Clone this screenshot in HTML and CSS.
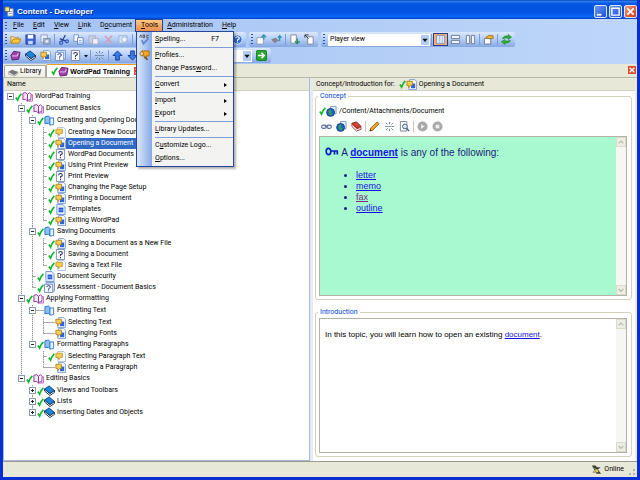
FILE: index.html
```
<!DOCTYPE html>
<html lang="en">

<head>
    <meta charset="UTF-8">
    <meta name="viewport" content="width=device-width, initial-scale=1.0">
    <title>Content - Developer</title>
    <link rel="stylesheet" href="styles.css">
</head>

<body>

    <!-- icon sprite -->
    <svg class="sprite" aria-hidden="true">
        <symbol id="check" viewBox="0 0 8 10"><path d="M1 5.500L3 8.500Q4.500 4 7.300 1.500" fill="none" stroke="#0cb82c" stroke-width="1.900"/></symbol>
        <symbol id="app" viewBox="0 0 12 12"><path d="M4 3h6v8H4z" fill="#fff" stroke="#8a8a80"/><path d="M5 6h4M5 8h4" stroke="#999"/><path d="M1 1h5v5H1z" fill="#f5e27a" stroke="#666"/></symbol>
        <symbol id="book-open" viewBox="0 0 12 12"><path d="M1 2.500Q4 .5 6 3.500v7.500Q4 8 1 9.500z" fill="#f4e2f6" stroke="#8c2d96"/><path d="M6 3.500Q8 .5 10 3.500L9.500 10Q7.500 8.500 6 11z" fill="#fff" stroke="#8c2d96"/><path d="M10 4h1.500v7H6" fill="none" stroke="#b565bd"/></symbol>
        <symbol id="chapter" viewBox="0 0 12 12"><path d="M1 2l4-1 1.500 2v8L5 9 1 9.500z" fill="#8cc0f6" stroke="#2a72cc"/><path d="M6.500 3.500L10.500 3v7.500l-4 .5z" fill="#eaf4ff" stroke="#2e7bd2"/></symbol>
        <symbol id="book-closed" viewBox="0 0 12 12"><path d="M.5 4.500L5.500 1l6 5-5 3.500z" fill="#1b86dc" stroke="#0a3d7c"/><path d="M.5 4.500v2L6.500 11.500l5-3.500V6l-5 3.500z" fill="#fff" stroke="#12294a"/></symbol>
        <symbol id="topic" viewBox="0 0 12 12"><path d="M4 .5h5.500l2 2v9H3z" fill="#eef5ff" stroke="#7d9fcd"/><path d="M5.500 5h4.500v5H5.500z" fill="#2c62da"/><path d="M1 2.500h6v4.500H5L3 9.500V7H1z" fill="#fbd052" stroke="#b5861a"/></symbol>
        <symbol id="note" viewBox="0 0 12 12"><path d="M3 .5h6.500l2 2v9H3z" fill="#f7faff" stroke="#a9bedb"/><path d="M1 2.500h7v4.500H6L4 9.500V7H1z" fill="#fbd052" stroke="#c49a2c"/></symbol>
        <symbol id="question" viewBox="0 0 12 12"><path d="M1.500.5h9v11h-9z" fill="#fff" stroke="#7a84a8"/><path d="M4 4.500Q4 2.700 6 2.700T8 4.500Q8 5.500 6 6.300V7.500M6 8.500V10" fill="none" stroke="#27337c" stroke-width="1.200"/></symbol>
        <symbol id="page" viewBox="0 0 12 12"><path d="M2 .5h6.500l2.500 2.500v8.500H2z" fill="#e3eeff" stroke="#6e93cf"/><path d="M4 4h5v5H4z" fill="#2458d8"/><path d="M4 6.500h5" stroke="#86a8f0"/></symbol>
        <symbol id="assess" viewBox="0 0 12 12"><path d="M2.500.5h9v9.500h-9z" fill="#dce8fa" stroke="#6e93cf"/><path d="M.5 2.500h9v9h-9z" fill="#f3f8ff" stroke="#6e8dbd"/><path d="M3 5.500Q3 4 5 4t2 1.500Q7 6.500 5 7.300V8.500M5 9.300v1" fill="none" stroke="#27337c"/></symbol>
        <symbol id="library" viewBox="0 0 12 12"><path d="M0 6.500L4.500 4l7 2.500L7 10z" fill="#777"/><path d="M0 6.500v2L7 11l4.500-3" fill="none" stroke="#aaa"/></symbol>
        <symbol id="title" viewBox="0 0 12 12"><path d="M1 6L4 1.500l7 1L9.500 10l-7 1z" fill="#a43fb0" stroke="#55205e"/><path d="M2 6.500h6L9 3" fill="none" stroke="#f0d0f4"/></symbol>
        <symbol id="folder" viewBox="0 0 12 12"><path d="M1 10V3h3l1 1h4v2" fill="#ffe9a0" stroke="#c08a1c"/><path d="M1 10l2.500-4.500H12L9.500 10z" fill="#ffc640" stroke="#b67f14"/></symbol>
        <symbol id="save" viewBox="0 0 12 12"><path d="M1 1h10v10H1z" fill="#3a62d8" stroke="#2440a0"/><path d="M3 1h6v4H3z" fill="#fff"/><path d="M3.500 7.500h5V11h-5z" fill="#c7d7f5"/></symbol>
        <symbol id="save-all" viewBox="0 0 12 12"><path d="M1 1h7v8H1z" fill="#eaf0fb" stroke="#8d9dbd"/><path d="M4 5h7v6H4z" fill="#a5b5d3" stroke="#7384a8"/><circle cx="7.500" cy="8" r="1.500" fill="#e8eef9"/></symbol>
        <symbol id="cut" viewBox="0 0 12 12"><path d="M8 1L4.500 8M2 5l7 3" stroke="#2a3b86" stroke-width="1.300"/><circle cx="3.500" cy="9.500" r="1.700" fill="none" stroke="#2b50c0" stroke-width="1.200"/><circle cx="9.800" cy="8" r="1.600" fill="none" stroke="#2b50c0" stroke-width="1.200"/></symbol>
        <symbol id="copy" viewBox="0 0 12 12"><path d="M1 1h5v7H1z" fill="#fff" stroke="#6f8fcf"/><path d="M5 4h6v7H5z" fill="#fff" stroke="#5b80c8"/><path d="M6.500 7h3M6.500 9h3" stroke="#7fa0e0"/></symbol>
        <symbol id="paste" viewBox="0 0 12 12"><path d="M1 2h7v8H1z" fill="#c9d2e2" stroke="#a2aec6"/><path d="M5 5h6v6H5z" fill="#eef2f9" stroke="#a2aec6"/></symbol>
        <symbol id="delete" viewBox="0 0 12 12"><path d="M2 2l8 8M10 2l-8 8" stroke="#d99bb4" stroke-width="1.500"/></symbol>
        <symbol id="props" viewBox="0 0 12 12"><path d="M1 2h9v8H1z" fill="#d9e5f8" stroke="#98afd6"/><circle cx="7" cy="6" r="3" fill="#eef4ff" stroke="#98afd6"/></symbol>
        <symbol id="help" viewBox="0 0 12 12"><circle cx="6" cy="6" r="5" fill="#2f6cd4" stroke="#e8f0ff"/><path d="M4 4.700Q4 3 6 3t2 1.500Q8 5.500 6 6.500v1M6 8.300v1" fill="none" stroke="#fff" stroke-width="1.200"/></symbol>
        <symbol id="export" viewBox="0 0 12 12"><path d="M1 4h7v7H1z" fill="#fff" stroke="#8e9cb4"/><path d="M8.500 6V1M6 3.500L8.500 1 11 3.500" fill="none" stroke="#2d98a8" stroke-width="1.500"/></symbol>
        <symbol id="export2" viewBox="0 0 12 12"><path d="M0 6l5-2 4 3-5 3z" fill="#7f8794"/><path d="M9.500 8V2M7.500 4L9.500 2l2 2" fill="none" stroke="#2d98a8" stroke-width="1.500"/></symbol>
        <symbol id="import" viewBox="0 0 12 12"><path d="M2 1h6v9H2z" fill="#fff" stroke="#7d8aa0"/><path d="M9 5v5M6.500 8L9 10.500 11.500 8" fill="none" stroke="#259058" stroke-width="1.500"/></symbol>
        <symbol id="history" viewBox="0 0 12 12"><path d="M4 3h6v8H4z" fill="#fff" stroke="#85858c"/><path d="M1 4V1h4M1 1l4 4" fill="none" stroke="#333"/></symbol>
        <symbol id="view-full" viewBox="0 0 12 12"><path d="M1.500 1.500h9v9h-9z" fill="#dbe8fb" stroke="#8093b8"/><path d="M5 2v8M8 2v8" stroke="#a9bfe4"/></symbol>
        <symbol id="view-rows" viewBox="0 0 12 12"><path d="M1.500 1.500h9v3.500h-9zM1.500 7h9v3.500h-9z" fill="#eef4fd" stroke="#6c7a92"/></symbol>
        <symbol id="view-cols" viewBox="0 0 12 12"><path d="M1.500 1.500h3.500v9H1.500zM7 1.500h3.500v9H7z" fill="#eef4fd" stroke="#6c7a92"/></symbol>
        <symbol id="hand" viewBox="0 0 12 12"><path d="M1.500 5h7v6h-7z" fill="#fff" stroke="#68779a"/><path d="M3 4Q6 0 11 2v3H6z" fill="#efb63c" stroke="#a8731a"/></symbol>
        <symbol id="refresh" viewBox="0 0 12 12"><path d="M1.500 5Q3 1.500 8 2V.5l3.500 3L8 6V4.500Q4 4 1.500 5z" fill="#2eb336" stroke="#0f7a1a" stroke-width=".6"/><path d="M10.500 7Q9 10.500 4 10v1.500L.5 8.500 4 6v1.500Q8 8 10.500 7z" fill="#2eb336" stroke="#0f7a1a" stroke-width=".6"/></symbol>
        <symbol id="unlink" viewBox="0 0 12 12"><path d="M1 6h3M8 6h3M6 1v2.500M6 8.500V11M2 2l2 2M10 2L8 4M2 10l2-2M10 10L8 8M4.500 6h3" stroke="#6b7b99"/></symbol>
        <symbol id="up" viewBox="0 0 12 12"><path d="M6 1l5 5H8v5H4V6H1z" fill="#3b7ce6" stroke="#163c96"/></symbol>
        <symbol id="down" viewBox="0 0 12 12"><path d="M6 11L1 6h3V1h4v5h3z" fill="#3b7ce6" stroke="#163c96"/></symbol>
        <symbol id="go" viewBox="0 0 12 12"><rect x=".5" y=".5" width="11" height="11" rx="1.500" fill="#2ba634" stroke="#14791c"/><path d="M2 6h7M6 3l3 3-3 3" fill="none" stroke="#fff" stroke-width="1.600"/></symbol>
        <symbol id="abc" viewBox="0 0 12 12"><path d="M1 4V2.500L2 1l1 1.500V4M4.500 1v3h1.500V1zM10.500 1.500H8.500v2.500h2" fill="none" stroke="#555"/><path d="M3 7l2 3.500L10 5" fill="none" stroke="#5d86cf" stroke-width="2"/></symbol>
        <symbol id="profile" viewBox="0 0 12 12"><path d="M3 1h8v5.500H8L6 9V6.500H3z" fill="#f5a623" stroke="#a86a10"/><circle cx="3" cy="4" r="2" fill="#f8d9a0" stroke="#9a6a20"/><path d="M6 8l2 3h2L8 7z" fill="#7a4a14"/></symbol>
        <symbol id="globe" viewBox="0 0 12 12"><path d="M5 .5h6v8H5z" fill="#e4edfb" stroke="#7c99c8"/><circle cx="5" cy="7" r="4.300" fill="#1f66c8" stroke="#123a7a"/><path d="M2.500 5.500Q4 3.500 6 4.500L5 7l2 1-1.500 2.500Q3 9 3.500 7.500z" fill="#35a552"/></symbol>
        <symbol id="link" viewBox="0 0 12 12"><rect x=".7" y="4.500" width="5" height="3.500" rx="1.700" fill="none" stroke="#5c6c9c" stroke-width="1.200"/><rect x="6.300" y="4.500" width="5" height="3.500" rx="1.700" fill="none" stroke="#5c6c9c" stroke-width="1.200"/><path d="M4 6.200h4" stroke="#5c6c9c"/></symbol>
        <symbol id="books" viewBox="0 0 12 12"><path d="M1 2.500L6 1l5 5-5 1.500z" fill="#d8422e" stroke="#8a1c12"/><path d="M1 3l5 5.500L11 7v2l-5 2L1 6z" fill="#fff" stroke="#a33"/></symbol>
        <symbol id="pencil" viewBox="0 0 12 12"><path d="M1 11l1-3.500L9 1l2 2-7 7z" fill="#f2a828" stroke="#8a5a12"/><path d="M1 11l.5-2L3 10.500z" fill="#222"/></symbol>
        <symbol id="preview" viewBox="0 0 12 12"><path d="M1.500.5h7v10.500h-7z" fill="#fff" stroke="#777f92"/><circle cx="6.500" cy="6" r="2.600" fill="#d9eafc" stroke="#43577e"/><path d="M8.500 8l2.500 3" stroke="#43577e" stroke-width="1.500"/></symbol>
        <symbol id="play" viewBox="0 0 12 12"><circle cx="6" cy="6" r="5.500" fill="#a9a9a9"/><path d="M4.500 3.500L8.500 6l-4 2.500z" fill="#eee"/></symbol>
        <symbol id="stop" viewBox="0 0 12 12"><circle cx="6" cy="6" r="5.500" fill="#a9a9a9"/><path d="M4 4h4v4H4z" fill="#eee"/></symbol>
        <symbol id="key" viewBox="0 0 14 10"><ellipse cx="3.500" cy="4.500" rx="2.300" ry="3.200" fill="none" stroke="#0a1fc0" stroke-width="1.700"/><path d="M6 4h7M9.500 4v3.500M12.300 4v3.500" fill="none" stroke="#0a1fc0" stroke-width="1.700"/></symbol>
        <symbol id="online" viewBox="0 0 12 12"><path d="M1 1.500h4l1.500 2h4L7.500 6l3.500 4.500H6z" fill="#3c3c34"/><path d="M2 4l4 2-4 3h3" fill="none" stroke="#8c8c7c"/><path d="M4.500 6h3l.5 3H5z" fill="#e6d23c"/></symbol>
        <symbol id="close" viewBox="0 0 12 12"><path d="M2.500 2.500l7 7M9.500 2.500l-7 7" stroke="#fff" stroke-width="2"/></symbol>
        <symbol id="drop" viewBox="0 0 12 12"><path d="M2 4h8L6 9z" fill="#111"/></symbol>
        <symbol id="chev-up" viewBox="0 0 12 12"><path d="M2.500 8L6 4.500 9.500 8" fill="none" stroke="#b8b8a8" stroke-width="1.800"/></symbol>
        <symbol id="chev-down" viewBox="0 0 12 12"><path d="M2.500 4.500L6 8l3.500-3.500" fill="none" stroke="#b8b8a8" stroke-width="1.800"/></symbol>
    </svg>

    <header class="titlebar">
        <svg class="icon"><use href="#app"/></svg>
        <h1>Content - Developer</h1>
        <button class="win-btn" aria-label="Minimize"><svg class="icon" viewBox="0 0 12 12"><path d="M2 9.500h5" stroke="#fff" stroke-width="2"/></svg></button>
        <button class="win-btn" aria-label="Restore"><svg class="icon" viewBox="0 0 12 12"><path d="M2 2.500h8v7.500H2z" fill="none" stroke="#fff" stroke-width="1.500"/></svg></button>
        <button class="win-btn win-close" aria-label="Close"><svg class="icon"><use href="#close"/></svg></button>
    </header>

    <nav class="menubar">
        <span class="grip"></span>
        <button><u>F</u>ile</button>
        <button><u>E</u>dit</button>
        <button><u>V</u>iew</button>
        <button><u>L</u>ink</button>
        <button>D<u>o</u>cument</button>
        <div class="menu-wrap">
            <button class="open"><u>T</u>ools</button>
            <div class="menu">
                <button><svg class="icon"><use href="#abc"/></svg><span><u>S</u>pelling...</span><kbd>F7</kbd></button>
                <hr>
                <button><svg class="icon"><use href="#profile"/></svg><span><u>P</u>rofiles...</span></button>
                <button><i class="icon"></i><span>Change Pass<u>w</u>ord...</span></button>
                <hr>
                <button class="sub"><i class="icon"></i><span><u>C</u>onvert</span></button>
                <hr>
                <button class="sub"><i class="icon"></i><span><u>I</u>mport</span></button>
                <button class="sub"><i class="icon"></i><span><u>E</u>xport</span></button>
                <hr>
                <button><i class="icon"></i><span><u>L</u>ibrary Updates...</span></button>
                <hr>
                <button><i class="icon"></i><span>C<u>u</u>stomize Logo...</span></button>
                <button><i class="icon"></i><span><u>O</u>ptions...</span></button>
            </div>
        </div>
        <button><u>A</u>dministration</button>
        <button><u>H</u>elp</button>
    </nav>

    <div class="toolbars">
        <div class="toolbar">
            <span class="grip"></span>
            <button aria-label="Open"><svg class="icon"><use href="#folder"/></svg></button>
            <button aria-label="Save"><svg class="icon"><use href="#save"/></svg></button>
            <button aria-label="Save all"><svg class="icon"><use href="#save-all"/></svg></button>
            <span class="sep"></span>
            <button aria-label="Cut"><svg class="icon"><use href="#cut"/></svg></button>
            <button aria-label="Copy"><svg class="icon"><use href="#copy"/></svg></button>
            <button aria-label="Paste"><svg class="icon"><use href="#paste"/></svg></button>
            <button aria-label="Delete"><svg class="icon"><use href="#delete"/></svg></button>
            <button aria-label="Properties"><svg class="icon"><use href="#props"/></svg></button>
            <span class="sep"></span>
            <span class="fill"></span>
            <button aria-label="Help"><svg class="icon"><use href="#help"/></svg></button>
        </div>
        <div class="toolbar">
            <span class="grip"></span>
            <button aria-label="Check in"><svg class="icon"><use href="#export"/></svg></button>
            <button aria-label="Check in all"><svg class="icon"><use href="#export2"/></svg></button>
            <span class="sep"></span>
            <button aria-label="Check out"><svg class="icon"><use href="#import"/></svg></button>
            <button aria-label="History"><svg class="icon"><use href="#history"/></svg></button>
        </div>
        <div class="toolbar">
            <span class="grip"></span>
            <span class="combo">
                <select aria-label="View"><option>Player view</option></select>
                <svg class="icon"><use href="#drop"/></svg>
            </span>
            <span class="sep"></span>
            <button class="on" aria-label="Single pane"><svg class="icon"><use href="#view-full"/></svg></button>
            <button aria-label="Split rows"><svg class="icon"><use href="#view-rows"/></svg></button>
            <button aria-label="Split columns"><svg class="icon"><use href="#view-cols"/></svg></button>
            <span class="sep"></span>
            <button aria-label="Customize"><svg class="icon"><use href="#hand"/></svg></button>
            <span class="sep"></span>
            <button aria-label="Refresh"><svg class="icon"><use href="#refresh"/></svg></button>
        </div>
    </div>

    <div class="toolbars">
        <div class="toolbar">
            <span class="grip"></span>
            <button aria-label="New title"><svg class="icon"><use href="#title"/></svg></button>
            <button aria-label="New section"><svg class="icon"><use href="#book-closed"/></svg></button>
            <button aria-label="New topic"><svg class="icon"><use href="#topic"/></svg></button>
            <button aria-label="New assessment"><svg class="icon"><use href="#assess"/></svg></button>
            <button aria-label="New question"><svg class="icon"><use href="#question"/></svg></button>
            <button class="narrow" aria-label="More"><svg class="icon"><use href="#drop"/></svg></button>
            <span class="sep"></span>
            <button aria-label="Unlink"><svg class="icon"><use href="#unlink"/></svg></button>
            <span class="sep"></span>
            <button aria-label="Move up"><svg class="icon"><use href="#up"/></svg></button>
            <button aria-label="Move down"><svg class="icon"><use href="#down"/></svg></button>
            <span class="sep"></span>
            <span class="combo find">
                <select aria-label="Find"><option></option></select>
                <svg class="icon"><use href="#drop"/></svg>
            </span>
            <button class="wide" aria-label="Go"><svg class="icon"><use href="#go"/></svg></button>
        </div>
    </div>

    <div class="tabs">
        <button class="tab"><svg class="icon"><use href="#library"/></svg>Library</button>
        <button class="tab active"><svg class="check"><use href="#check"/></svg><svg class="icon"><use href="#title"/></svg>WordPad Training<span class="red-x"><svg class="icon"><use href="#close"/></svg></span></button>
        <button class="red-x" aria-label="Close tab"><svg class="icon"><use href="#close"/></svg></button>
    </div>

    <main>
        <section class="outline">
            <div class="colhead">Name</div>
            <ul class="tree">
                <li>
                    <div class="row"><button class="box" aria-label="Collapse"></button><svg class="check"><use href="#check"/></svg><svg class="icon"><use href="#book-open"/></svg><span>WordPad Training</span></div>
                    <ul>
                        <li>
                            <div class="row"><button class="box" aria-label="Collapse"></button><svg class="check"><use href="#check"/></svg><svg class="icon"><use href="#book-open"/></svg><span>Document Basics</span></div>
                            <ul>
                                <li>
                                    <div class="row"><button class="box" aria-label="Collapse"></button><svg class="check"><use href="#check"/></svg><svg class="icon"><use href="#chapter"/></svg><span>Creating and Opening Documents</span></div>
                                    <ul>
                                        <li><div class="row"><i class="stub"></i><svg class="check"><use href="#check"/></svg><svg class="icon"><use href="#note"/></svg><span>Creating a New Document</span></div></li>
                                        <li><div class="row selected"><i class="stub"></i><svg class="check"><use href="#check"/></svg><svg class="icon"><use href="#topic"/></svg><span>Opening a Document</span></div></li>
                                        <li><div class="row"><i class="stub"></i><svg class="check"><use href="#check"/></svg><svg class="icon"><use href="#question"/></svg><span>WordPad Documents</span></div></li>
                                        <li><div class="row"><i class="stub"></i><svg class="check"><use href="#check"/></svg><svg class="icon"><use href="#topic"/></svg><span>Using Print Preview</span></div></li>
                                        <li><div class="row"><i class="stub"></i><svg class="check"><use href="#check"/></svg><svg class="icon"><use href="#question"/></svg><span>Print Preview</span></div></li>
                                        <li><div class="row"><i class="stub"></i><svg class="check"><use href="#check"/></svg><svg class="icon"><use href="#topic"/></svg><span>Changing the Page Setup</span></div></li>
                                        <li><div class="row"><i class="stub"></i><svg class="check"><use href="#check"/></svg><svg class="icon"><use href="#topic"/></svg><span>Printing a Document</span></div></li>
                                        <li><div class="row"><i class="stub"></i><svg class="check"><use href="#check"/></svg><svg class="icon"><use href="#page"/></svg><span>Templates</span></div></li>
                                        <li><div class="row"><i class="stub"></i><svg class="check"><use href="#check"/></svg><svg class="icon"><use href="#topic"/></svg><span>Exiting WordPad</span></div></li>
                                    </ul>
                                </li>
                                <li>
                                    <div class="row"><button class="box" aria-label="Collapse"></button><svg class="check"><use href="#check"/></svg><svg class="icon"><use href="#chapter"/></svg><span>Saving Documents</span></div>
                                    <ul>
                                        <li><div class="row"><i class="stub"></i><svg class="check"><use href="#check"/></svg><svg class="icon"><use href="#topic"/></svg><span>Saving a Document as a New File</span></div></li>
                                        <li><div class="row"><i class="stub"></i><svg class="check"><use href="#check"/></svg><svg class="icon"><use href="#question"/></svg><span>Saving a Document</span></div></li>
                                        <li><div class="row"><i class="stub"></i><svg class="check"><use href="#check"/></svg><svg class="icon"><use href="#note"/></svg><span>Saving a Text File</span></div></li>
                                    </ul>
                                </li>
                                <li><div class="row"><i class="stub"></i><svg class="check"><use href="#check"/></svg><svg class="icon"><use href="#page"/></svg><span>Document Security</span></div></li>
                                <li><div class="row"><i class="stub"></i><svg class="check"><use href="#check"/></svg><svg class="icon"><use href="#assess"/></svg><span>Assessment - Document Basics</span></div></li>
                            </ul>
                        </li>
                        <li>
                            <div class="row"><button class="box" aria-label="Collapse"></button><svg class="check"><use href="#check"/></svg><svg class="icon"><use href="#book-open"/></svg><span>Applying Formatting</span></div>
                            <ul>
                                <li>
                                    <div class="row"><button class="box" aria-label="Collapse"></button><i class="dash"></i><svg class="icon"><use href="#chapter"/></svg><span>Formatting Text</span></div>
                                    <ul>
                                        <li><div class="row"><i class="stub"></i><i class="dash"></i><svg class="icon"><use href="#topic"/></svg><span>Selecting Text</span></div></li>
                                        <li><div class="row"><i class="stub"></i><i class="dash"></i><svg class="icon"><use href="#topic"/></svg><span>Changing Fonts</span></div></li>
                                    </ul>
                                </li>
                                <li>
                                    <div class="row"><button class="box" aria-label="Collapse"></button><svg class="check"><use href="#check"/></svg><svg class="icon"><use href="#chapter"/></svg><span>Formatting Paragraphs</span></div>
                                    <ul>
                                        <li><div class="row"><i class="stub"></i><svg class="check"><use href="#check"/></svg><svg class="icon"><use href="#note"/></svg><span>Selecting Paragraph Text</span></div></li>
                                        <li><div class="row"><i class="stub"></i><i class="dash"></i><svg class="icon"><use href="#topic"/></svg><span>Centering a Paragraph</span></div></li>
                                    </ul>
                                </li>
                            </ul>
                        </li>
                        <li>
                            <div class="row"><button class="box" aria-label="Collapse"></button><svg class="check"><use href="#check"/></svg><svg class="icon"><use href="#book-open"/></svg><span>Editing Basics</span></div>
                            <ul>
                                <li><div class="row"><button class="box plus" aria-label="Expand"></button><svg class="check"><use href="#check"/></svg><svg class="icon"><use href="#book-closed"/></svg><span>Views and Toolbars</span></div></li>
                                <li><div class="row"><button class="box plus" aria-label="Expand"></button><svg class="check"><use href="#check"/></svg><svg class="icon"><use href="#book-closed"/></svg><span>Lists</span></div></li>
                                <li><div class="row"><button class="box plus" aria-label="Expand"></button><svg class="check"><use href="#check"/></svg><svg class="icon"><use href="#book-closed"/></svg><span>Inserting Dates and Objects</span></div></li>
                            </ul>
                        </li>
                    </ul>
                </li>
            </ul>
        </section>

        <section class="detail">
            <div class="colhead">Concept/Introduction for: <svg class="check"><use href="#check"/></svg><svg class="icon"><use href="#topic"/></svg><span>Opening a Document</span></div>
            <fieldset class="concept">
                <legend>Concept</legend>
                <div class="path"><svg class="check"><use href="#check"/></svg><svg class="icon"><use href="#globe"/></svg><span>/Content/Attachments/Document</span></div>
                <div class="tools">
                    <button aria-label="Link"><svg class="icon"><use href="#link"/></svg></button>
                    <button aria-label="Web page"><svg class="icon"><use href="#globe"/></svg></button>
                    <button aria-label="Glossary"><svg class="icon"><use href="#books"/></svg></button>
                    <span class="sep"></span>
                    <button aria-label="Edit"><svg class="icon"><use href="#pencil"/></svg></button>
                    <button aria-label="Unlink"><svg class="icon"><use href="#unlink"/></svg></button>
                    <button aria-label="Preview"><svg class="icon"><use href="#preview"/></svg></button>
                    <span class="sep"></span>
                    <button aria-label="Play"><svg class="icon"><use href="#play"/></svg></button>
                    <button aria-label="Stop"><svg class="icon"><use href="#stop"/></svg></button>
                </div>
                <div class="frame">
                    <article class="green">
                        <p><svg class="key"><use href="#key"/></svg> A <a href="#"><b>document</b></a> is any of the following:</p>
                        <ul>
                            <li><a href="#">letter</a></li>
                            <li><a href="#">memo</a></li>
                            <li><a class="seen" href="#">fax</a></li>
                            <li><a href="#">outline</a></li>
                        </ul>
                    </article>
                    <div class="scroll"><button aria-label="Scroll up"><svg class="icon"><use href="#chev-up"/></svg></button><button aria-label="Scroll down"><svg class="icon"><use href="#chev-down"/></svg></button></div>
                </div>
            </fieldset>
            <fieldset class="intro">
                <legend>Introduction</legend>
                <div class="frame">
                    <article>
                        <p>In this topic, you will learn how to open an existing <a href="#">document</a>.</p>
                    </article>
                    <div class="scroll"><button aria-label="Scroll up"><svg class="icon"><use href="#chev-up"/></svg></button><button aria-label="Scroll down"><svg class="icon"><use href="#chev-down"/></svg></button></div>
                </div>
            </fieldset>
        </section>
    </main>

    <footer>
        <svg class="icon"><use href="#online"/></svg>
        <span>Online</span>
        <svg class="size-grip" viewBox="0 0 8 8"><path d="M5 1h2v2H5zM5 5h2v2H5zM1 5h2v2H1z" fill="#b5b3a0"/></svg>
    </footer>

</body>

</html>
```

FILE: styles.css
```
* {
    box-sizing: border-box;
}

body {
    margin: 0;
    min-height: 100vh;
    display: flex;
    flex-direction: column;
    font: 7px/11px Roboto, "Liberation Sans", sans-serif;
    color: #000;
    background-color: #e8e8d8;
    border: solid #0a2fd0;
    border-width: 0 3px 3px;
}

button,
select {
    font: inherit;
    color: inherit;
    padding: 0;
    border: none;
    background: none;
    white-space: nowrap;
}

ul {
    list-style: none;
    margin: 0;
    padding: 0;
}

u {
    text-underline-offset: 1px;
}

.sprite {
    width: 0;
    height: 0;
    position: absolute;
}

.icon {
    width: 11px;
    height: 11px;
    flex: none;
    display: block;
}

.check {
    width: 7px;
    height: 10px;
    flex: none;
    display: block;
}

/* title bar */
.titlebar {
    height: 19px;
    margin: 0 -3px;
    padding: 3px 3px 0 4px;
    display: flex;
    align-items: center;
    gap: 2px;
    color: #fff;
    background: linear-gradient(#0a48b0 0, #2a7bf0 8%, #0355e0 20%, #0453e4 65%, #0a66fc 88%, #0341c0 100%);
}

.titlebar h1 {
    flex: 1;
    margin: 0;
    font: bold 8px/11px "Liberation Sans", sans-serif;
    text-shadow: 1px 1px #0a2f90;
}

.win-btn {
    width: 13px;
    height: 13px;
    border: 1px solid #dfe8fb;
    border-radius: 2px;
    background: linear-gradient(135deg, #6c95f2, #1d4fd8);
}

.win-close {
    background: linear-gradient(135deg, #f0987c, #d4380e);
}

/* menu bar */
.menubar {
    height: 13px;
    padding: 1px 0 1px 1px;
    display: flex;
    background: linear-gradient(90deg, #a4c2f4, #bed6f8);
}

.menubar > button,
.menu-wrap > button {
    height: 11px;
    padding: 0 4px 0 5px;
}

.menu-wrap {
    position: relative;
}

.menu-wrap .open {
    background: linear-gradient(#fdc988, #f08c48);
    outline: 1px solid #24479c;
}

.menu {
    position: absolute;
    top: 11px;
    left: 0;
    z-index: 5;
    width: 98px;
    padding: 1px 0;
    border: 1px solid #24479c;
    background: linear-gradient(90deg, #dbe8fc, #86aae8 15px, #f3f3f1 15px);
    box-shadow: 2px 2px 2px rgba(0, 0, 0, 0.3);
}

.menu button {
    width: 100%;
    height: 13px;
    padding: 0 6px 0 2px;
    display: flex;
    align-items: center;
    gap: 5px;
    text-align: left;
}

.menu span {
    flex: 1;
}

.menu kbd {
    font: inherit;
    padding-right: 8px;
}

.menu .sub::after {
    content: "";
    border: 2px solid transparent;
    border-left: 3px solid #000;
    border-right: 0;
}

.menu hr {
    margin: 1px 0 1px 18px;
    border: none;
    height: 1px;
    background-color: #7f9fd8;
}

/* tool bars */
.toolbars {
    height: 16px;
    display: flex;
    gap: 3px;
    background: linear-gradient(90deg, #a4c2f4, #bed6f8);
}

.toolbar {
    height: 15px;
    padding: 0 1px;
    display: flex;
    align-items: center;
    border-radius: 2px;
    background: linear-gradient(#dbe8fc, #b4cdf6 50%, #84a7e2);
}

.grip {
    width: 2px;
    margin: 2px 1px;
    align-self: stretch;
    background: repeating-linear-gradient(#33559c 0 1px, transparent 1px 3px);
}

.toolbar button {
    width: 15px;
    height: 13px;
    display: flex;
    align-items: center;
    justify-content: center;
}

.toolbar button.narrow {
    width: 6px;
}

.toolbar button.wide {
    width: 18px;
}

.narrow .icon {
    width: 6px;
    height: 6px;
}

.toolbar button.on {
    border: 1px solid #2a3c90;
    background-color: #f8b070;
}

.sep {
    width: 1px;
    height: 11px;
    margin: 0 1px;
    background-color: #7a9cdc;
}

.fill {
    width: 96px;
}

.combo {
    width: 102px;
    height: 12px;
    margin-left: 2px;
    display: flex;
    align-items: center;
    background-color: #fff;
}

.combo.find {
    width: 107px;
}

.combo select {
    flex: 1;
    min-width: 0;
    height: 12px;
    padding-left: 2px;
    appearance: none;
}

.combo .icon {
    width: 8px;
    height: 10px;
    margin-right: 1px;
    background-color: #b4cdf6;
}

/* document tabs */
.tabs {
    height: 14px;
    padding: 0 1px;
    display: flex;
    align-items: flex-end;
    border-bottom: 1px solid #b8b8a8;
}

.tab {
    height: 12px;
    padding: 0 4px 0 3px;
    display: flex;
    align-items: center;
    border: 1px solid #a8a898;
    border-bottom: none;
    border-radius: 2px 2px 0 0;
    background: linear-gradient(#fff, #eeede2);
}

.tab.active {
    height: 13px;
    padding: 0 2px 0 4px;
    font: bold 7px/11px "Liberation Sans", sans-serif;
    border-top: 1px solid #f4a010;
    background: #fff;
}

.tab .icon {
    margin-right: 1px;
}

.red-x {
    width: 8px;
    height: 8px;
    margin: 0 0 3px auto;
    background-color: #dc4a28;
}

.tab .red-x {
    margin: 0 0 0 4px;
}

.red-x .icon {
    width: 8px;
    height: 8px;
}

/* panes */
main {
    flex: 1;
    display: grid;
    grid-template-columns: 307fr 324fr;
    column-gap: 3px;
    background-color: #e6eaf0;
    border-bottom: 1px solid #98988c;
}

.outline,
.detail {
    min-width: 0;
    background-color: #fff;
}

.outline {
    border: solid #a4bcd8;
    border-width: 0 1px 1px;
}

.detail {
    display: flex;
    flex-direction: column;
    border-right: 2px solid #ecebe0;
}

.colhead {
    height: 13px;
    padding: 0 3px;
    display: flex;
    align-items: center;
    background-color: #e8e8d8;
    border-bottom: 1px solid #d0cfc0;
}

.colhead .check {
    margin-left: 4px;
}

.colhead span {
    margin-left: 2px;
}

/* outline tree, dotted lines are drawn as backgrounds */
.tree {
    padding: 0 0 0 3px;
}

.tree ul {
    padding: 1px 0 0 11px;
}

.tree li li {
    background: repeating-linear-gradient(#999 0 1px, #ddd 1px 2px) 3px 0 / 1px 100% no-repeat;
}

.tree li li:last-child {
    background-size: 1px 6px;
}

.row {
    height: 11px;
    display: flex;
    align-items: center;
    white-space: nowrap;
}

.row > span {
    height: 11px;
    padding: 0 5px 0 2px;
}

.row .check {
    margin-left: 1px;
}

.selected > span {
    color: #fff;
    background-color: #316ac5;
}

.box {
    width: 7px;
    height: 7px;
    border: 1px solid #8a98b0;
    background: linear-gradient(#223, #223) 1px 2px / 3px 1px no-repeat, #fff;
}

.box.plus {
    background: linear-gradient(#223, #223) 1px 2px / 3px 1px no-repeat, linear-gradient(#223, #223) 2px 1px / 1px 3px no-repeat, #fff;
}

.stub {
    width: 4px;
    height: 1px;
    margin-left: 3px;
    background-color: #aaa;
}

.dash {
    width: 8px;
    height: 1px;
    background-color: #aaa;
}

/* detail pane */
fieldset {
    min-width: 0;
    margin: 0 3px 0 2px;
    padding: 0 4px 3px 3px;
    border: 1px solid #d4d2bc;
    border-radius: 3px;
}

legend {
    margin-left: -1px;
    padding: 0 2px;
    color: #0046d5;
}

.concept {
    flex: 209 0 0;
    display: flex;
    flex-direction: column;
}

.intro {
    flex: 149 0 0;
    margin-top: 7px;
    margin-bottom: 4px;
    display: flex;
    flex-direction: column;
}

.path {
    height: 18px;
    display: flex;
    align-items: center;
}

.path span {
    margin-left: 2px;
}

.tools {
    height: 16px;
    padding-bottom: 3px;
    display: flex;
    align-items: center;
}

.tools button {
    width: 15px;
    display: flex;
    justify-content: center;
}

.tools .sep {
    background-color: #c8c6b0;
}

.frame {
    flex: 1;
    display: flex;
    border: 1px solid #b4b2a4;
}

article {
    flex: 1;
    padding: 10px 5px;
    font: 8px/11px "Liberation Sans", sans-serif;
}

article p {
    margin: 0;
}

article a {
    color: #1414e0;
}

article a.seen {
    color: #7a2c80;
}

.green {
    font-size: 9px;
    color: #1c1c78;
    background-color: #a8f8d0;
}

.green p {
    font-size: 10px;
}

.green ul {
    margin-top: 12px;
    padding-left: 31px;
    list-style: disc;
}

.key {
    width: 14px;
    height: 10px;
    vertical-align: -1px;
}

.scroll {
    width: 10px;
    display: flex;
    flex-direction: column;
    justify-content: space-between;
    background-color: #f6f6f2;
}

.scroll button {
    height: 10px;
    border: 1px solid #dcdacc;
    background-color: #efeee6;
}

.scroll .icon {
    width: 8px;
    height: 8px;
}

/* status bar */
footer {
    height: 15px;
    padding-right: 1px;
    display: flex;
    align-items: center;
    justify-content: flex-end;
    gap: 2px;
}

.size-grip {
    width: 8px;
    height: 8px;
    margin: 5px 0 0 2px;
}
```
